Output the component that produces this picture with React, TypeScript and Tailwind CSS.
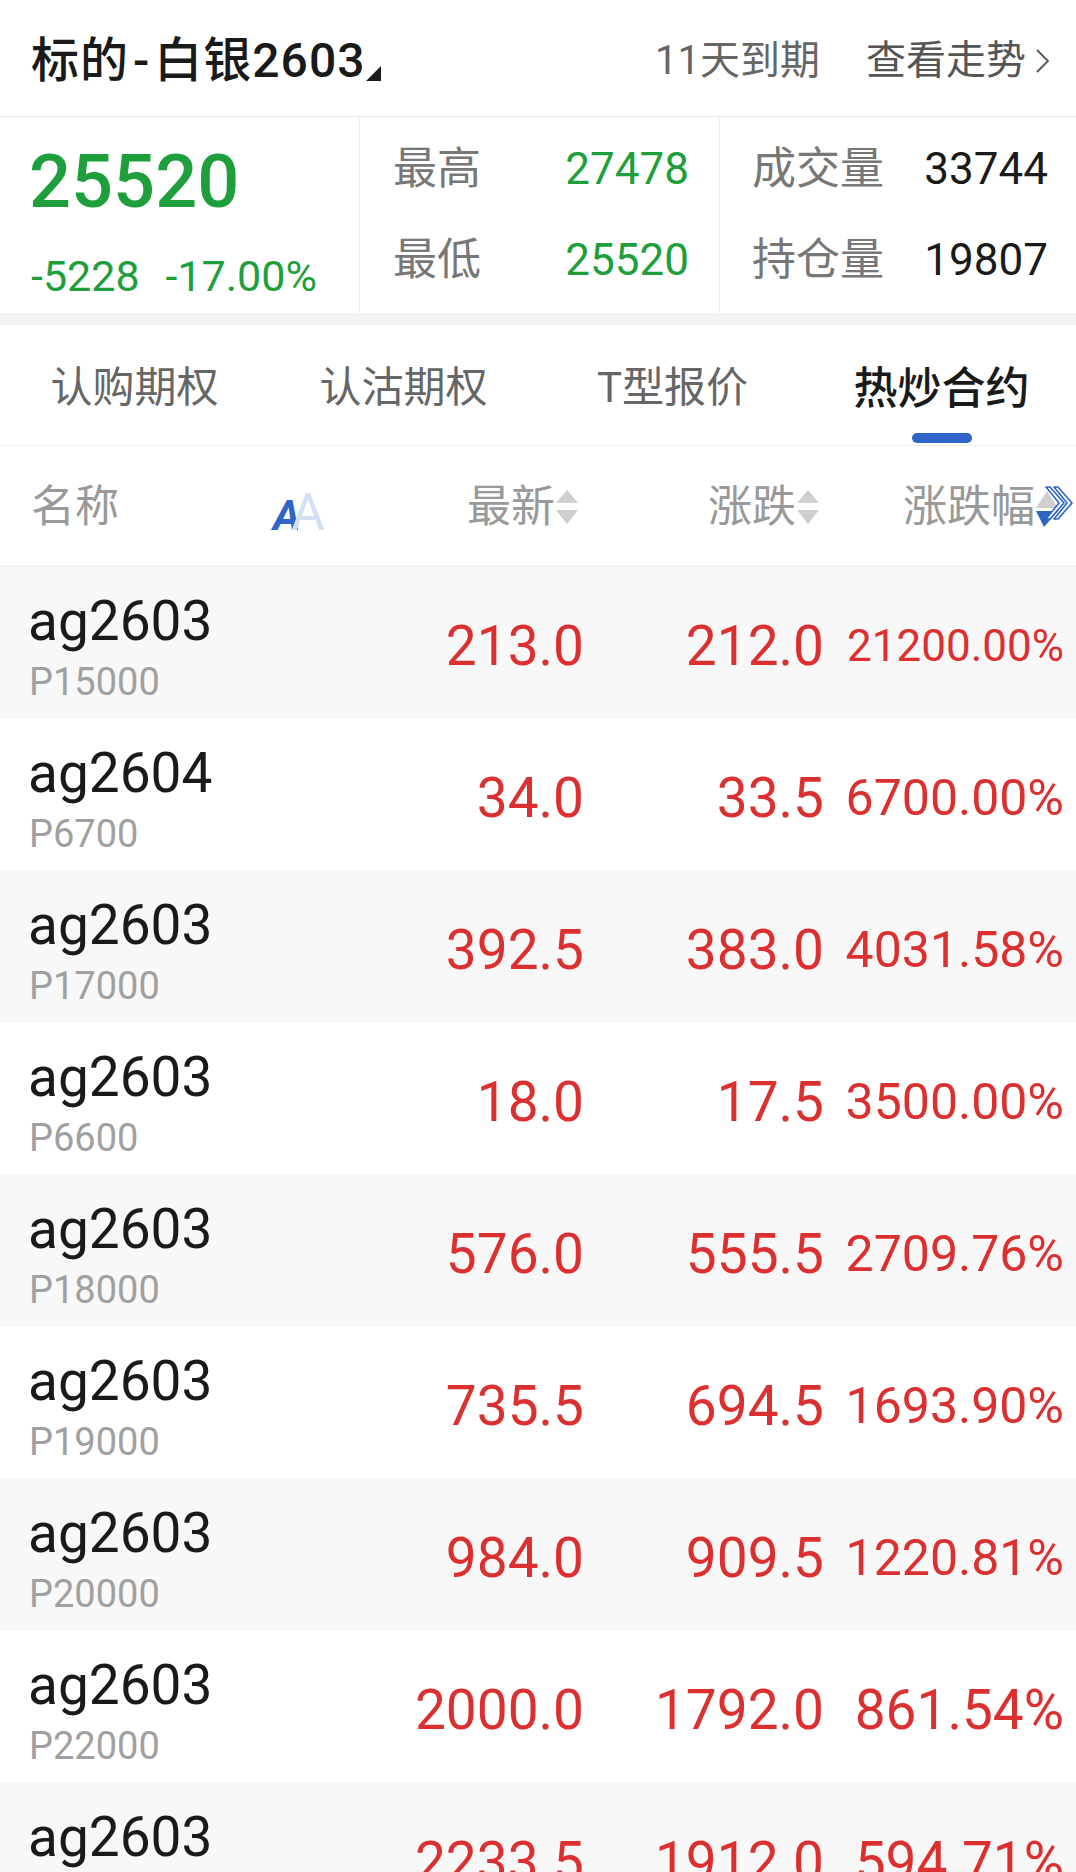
import React from 'react';

type Row = {
  name: string;
  strike: string;
  last: string;
  chg: string;
  pct: string;
  pctCls: string;
};

const rows: Row[] = [
  { name: 'ag2603', strike: 'P15000', last: '213.0', chg: '212.0', pct: '21200.00%', pctCls: 'text-[44px]' },
  { name: 'ag2604', strike: 'P6700', last: '34.0', chg: '33.5', pct: '6700.00%', pctCls: 'text-[50px]' },
  { name: 'ag2603', strike: 'P17000', last: '392.5', chg: '383.0', pct: '4031.58%', pctCls: 'text-[50px]' },
  { name: 'ag2603', strike: 'P6600', last: '18.0', chg: '17.5', pct: '3500.00%', pctCls: 'text-[50px]' },
  { name: 'ag2603', strike: 'P18000', last: '576.0', chg: '555.5', pct: '2709.76%', pctCls: 'text-[50px]' },
  { name: 'ag2603', strike: 'P19000', last: '735.5', chg: '694.5', pct: '1693.90%', pctCls: 'text-[50px]' },
  { name: 'ag2603', strike: 'P20000', last: '984.0', chg: '909.5', pct: '1220.81%', pctCls: 'text-[50px]' },
  { name: 'ag2603', strike: 'P22000', last: '2000.0', chg: '1792.0', pct: '861.54%', pctCls: 'text-[55px]' },
  { name: 'ag2603', strike: 'P24000', last: '2233.5', chg: '1912.0', pct: '594.71%', pctCls: 'text-[55px]' },
];

const tabs = ['认购期权', '认沽期权', 'T型报价', '热炒合约'];

function SortArrows() {
  return (
    <svg width="24" height="36" viewBox="0 0 24 36" className="shrink-0">
      <polygon points="12,1 23,14 1,14" fill="#cfcfcf" />
      <polygon points="1,21 23,21 12,35" fill="#cfcfcf" />
    </svg>
  );
}

function PctSortIcon() {
  return (
    <svg width="38" height="42" viewBox="0 0 38 42" className="shrink-0">
      <polygon points="12,5 23,22 1,22" fill="#cfcfcf" />
      <polygon points="1,25 23,25 9,41" fill="#2f64c8" />
      <path d="M19 1 L23 1 L37 17 L23 33 L19 33 L32 17 Z" fill="#ffffff" stroke="#2f64c8" strokeWidth="1.6" strokeLinejoin="round" />
      <path d="M11 1 L15 1 L29 17 L15 33 L11 33 L24 17 Z" fill="#ffffff" stroke="#2f64c8" strokeWidth="1.6" strokeLinejoin="round" />
    </svg>
  );
}

function FontSizeIcon() {
  return (
    <div className="relative h-[44px] w-[56px] shrink-0">
      <span className="absolute bottom-[-8px] left-0 text-[42px] font-bold italic leading-none text-[#2f64c8]">A</span>
      <span className="absolute bottom-[-10px] left-[18px] text-[52px] leading-none text-[#d3dff3]">A</span>
    </div>
  );
}

export default function App() {
  return (
    <div className="w-full bg-white font-[family-name:Roboto,'Noto_Sans_CJK_SC',sans-serif]">
      {/* Header */}
      <div className="flex h-[117px] items-center border-b border-[#e8e8e8] bg-white pl-[31px] pr-[26px] pt-[6px]">
        <div className="flex items-end">
          <span className="text-[48px] font-medium leading-none tracking-[1px] text-[#1a1a1a]">
            标的<span className="mx-[4px]">-</span>白银2603
          </span>
          <svg width="15" height="15" viewBox="0 0 15 15" className="mb-[4px] ml-[1px]">
            <polygon points="15,0 15,15 0,15" fill="#1a1a1a" />
          </svg>
        </div>
        <div className="ml-auto flex items-center text-[40px] leading-none">
          <span className="text-[#666666]">11天到期</span>
          <span className="ml-[46px] flex items-center text-[#555555]">
            查看走势
            <svg width="16" height="26" viewBox="0 0 16 26" className="ml-[8px]">
              <polyline points="3,2 14,13 3,24" fill="none" stroke="#555555" strokeWidth="1.8" />
            </svg>
          </span>
        </div>
      </div>

      {/* Stats */}
      <div className="flex h-[196px] bg-white">
        <div className="w-[360px] border-r border-[#ebebeb] pl-[29px]">
          <div className="pt-[28px] text-[74px] font-medium leading-none text-[#1f9f3c]">25520</div>
          <div className="mt-[36px] flex text-[43px] leading-none text-[#1f9f3c]">
            <span className="ml-[2px]">-5228</span>
            <span className="ml-[26px]">-17.00%</span>
          </div>
        </div>
        <div className="flex w-[360px] flex-col border-r border-[#ebebeb] pl-[33px] pr-[30px] pt-[6px]">
          <div className="flex h-[91px] items-center justify-between">
            <span className="text-[44px] leading-none text-[#777777]">最高</span>
            <span className="text-[44px] leading-none text-[#1f9f3c]">27478</span>
          </div>
          <div className="flex h-[91px] items-center justify-between">
            <span className="text-[44px] leading-none text-[#777777]">最低</span>
            <span className="text-[44px] leading-none text-[#1f9f3c]">25520</span>
          </div>
        </div>
        <div className="flex flex-1 flex-col pl-[32px] pr-[28px] pt-[6px]">
          <div className="flex h-[91px] items-center justify-between">
            <span className="text-[44px] leading-none text-[#777777]">成交量</span>
            <span className="text-[44px] leading-none text-[#1a1a1a]">33744</span>
          </div>
          <div className="flex h-[91px] items-center justify-between">
            <span className="text-[44px] leading-none text-[#777777]">持仓量</span>
            <span className="text-[44px] leading-none text-[#1a1a1a]">19807</span>
          </div>
        </div>
      </div>

      <div className="h-[12px] bg-[#f4f4f4]" />

      {/* Tabs */}
      <div className="grid h-[121px] grid-cols-4 border-b border-[#eeeeee] bg-white">
        {tabs.map((t, i) => {
          const active = i === 3;
          return (
            <div key={t} className="flex flex-col items-center pt-[42px]">
              {active ? (
                <>
                  <span className="text-[44px] font-medium leading-none text-[#1a1a1a]">{t}</span>
                  <div className="mt-[22px] h-[10px] w-[60px] rounded-full bg-[#2f64c8]" />
                </>
              ) : (
                <span className="text-[42px] leading-none text-[#666666]">{t}</span>
              )}
            </div>
          );
        })}
      </div>

      {/* Column header */}
      <div className="grid h-[121px] grid-cols-[1fr_240px_240px_240px] border-b border-[#eeeeee] bg-white pl-[31px] pr-[12px] pt-[2px]">
        <div className="flex items-center">
          <span className="text-[44px] leading-none text-[#999999]">名称</span>
          <div className="ml-[154px]">
            <FontSizeIcon />
          </div>
        </div>
        <div className="flex items-center justify-end pr-[5px]">
          <span className="text-[44px] leading-none text-[#999999]">最新</span>
          <SortArrows />
        </div>
        <div className="flex items-center justify-end pr-[4px]">
          <span className="text-[44px] leading-none text-[#999999]">涨跌</span>
          <SortArrows />
        </div>
        <div className="-mr-[9px] flex items-center justify-end">
          <span className="text-[44px] leading-none text-[#999999]">涨跌幅</span>
          <PctSortIcon />
        </div>
      </div>

      {/* Rows */}
      {rows.map((r, i) => (
        <div
          key={i}
          className={`grid h-[152px] grid-cols-[1fr_240px_240px_240px] pl-[28px] pr-[12px] ${
            i % 2 === 0 ? 'bg-[#f8f8f8]' : 'bg-white'
          }`}
        >
          <div className="flex flex-col pt-[27px]">
            <span className="text-[55px] leading-none text-[#1a1a1a]">{r.name}</span>
            <span className="ml-[1px] mt-[14px] text-[38px] leading-none text-[#a0a0a0]">{r.strike}</span>
          </div>
          <div className="flex items-center justify-end pt-[6px]">
            <span className="text-[55px] leading-none text-[#dc3030]">{r.last}</span>
          </div>
          <div className="flex items-center justify-end pt-[6px]">
            <span className="text-[55px] leading-none text-[#dc3030]">{r.chg}</span>
          </div>
          <div className="flex items-center justify-end pt-[6px]">
            <span className={`${r.pctCls} leading-none text-[#dc3030]`}>{r.pct}</span>
          </div>
        </div>
      ))}
    </div>
  );
}
